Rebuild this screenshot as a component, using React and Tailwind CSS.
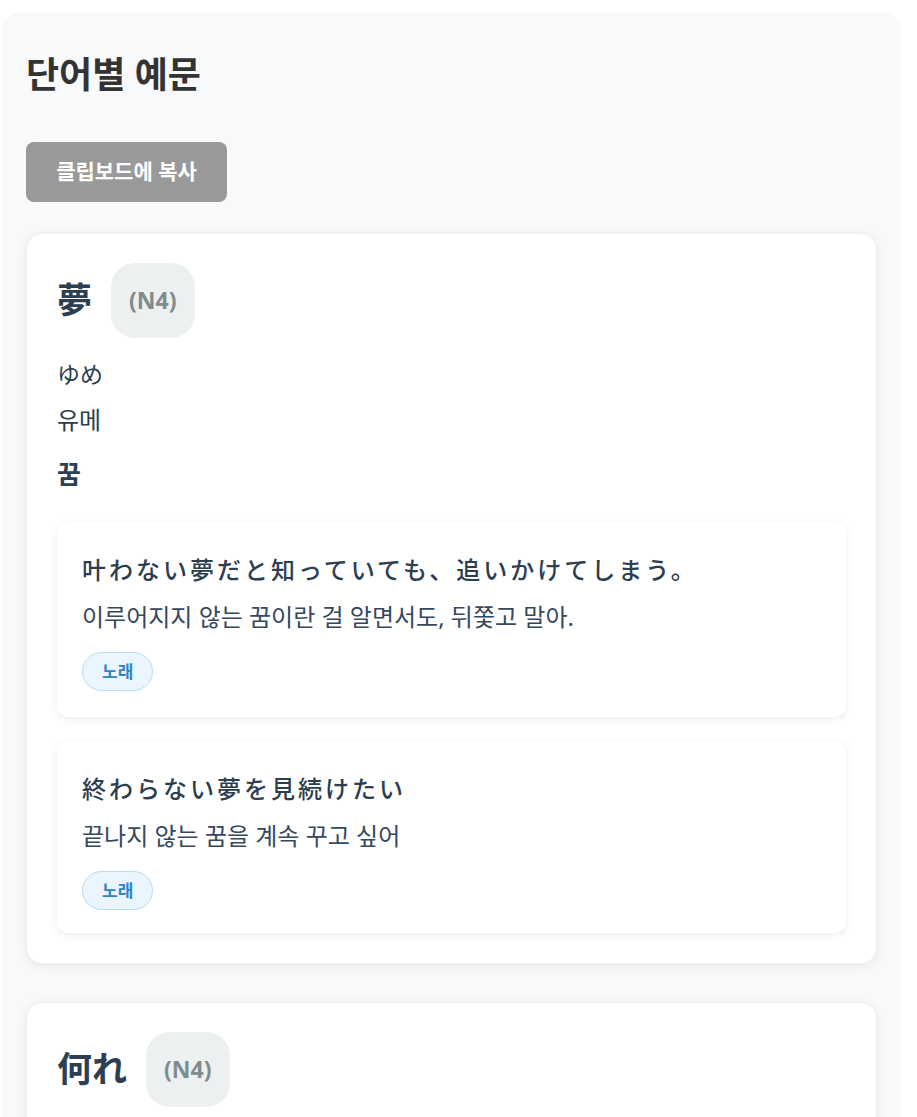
const words = [
  {
    word: '夢',
    level: 'N4',
    reading: 'ゆめ',
    pron: '유메',
    meaning: '꿈',
    examples: [
      { jp: '叶わない夢だと知っていても、追いかけてしまう。', kr: '이루어지지 않는 꿈이란 걸 알면서도, 뒤쫓고 말아.', tag: '노래' },
      { jp: '終わらない夢を見続けたい', kr: '끝나지 않는 꿈을 계속 꾸고 싶어', tag: '노래' },
    ],
  },
  {
    word: '何れ',
    level: 'N4',
  },
];

const font = { fontFamily: '"Noto Sans", "Noto Sans CJK KR", sans-serif' };
const jpFont = { fontFamily: '"Noto Sans", "Noto Sans CJK JP", sans-serif' };

function ExampleCard({ ex, short }) {
  return (
    <div className={`bg-white rounded-xl shadow-[0_2px_8px_rgba(0,0,0,0.08)] px-[25px] pt-[26px] ${short ? 'pb-[23px]' : 'pb-[26px]'}`}>
      <div className="h-[44px] flex items-center text-[24px] tracking-[3px] text-[#2c3e50] font-medium" style={jpFont}>
        {ex.jp}
      </div>
      <div className="h-[30px] mt-[10px] flex items-center text-[24px] text-[#34495e]">{ex.kr}</div>
      <div className="mt-[20px]">
        <span className="inline-flex items-center h-[39px] px-[19px] rounded-full bg-[#eaf5fd] border border-[#b9dcf3] text-[#2e86c1] text-[17px] font-semibold">
          {ex.tag}
        </span>
      </div>
    </div>
  );
}

function WordCard({ w }) {
  return (
    <div className="bg-white rounded-2xl shadow-[0_2px_10px_rgba(0,0,0,0.08)] border border-[#eef0f2] px-[30px] pt-[29px] pb-[30px]">
      <div className="flex items-center gap-[19px]">
        <span className="text-[35px] font-bold text-[#2c3e50]" style={jpFont}>{w.word}</span>
        <span className="h-[75px] px-[18px] flex items-center rounded-[24px] bg-[#ecf0f1] text-[#7f8c8d] text-[23px] font-bold">
          ({w.level})
        </span>
      </div>
      {w.reading && (
        <>
          <div className="h-[34px] mt-[19px] flex items-center text-[23px] text-[#2c3e50]" style={jpFont}>{w.reading}</div>
          <div className="h-[34px] mt-[12px] flex items-center text-[24px] text-[#2c3e50]">{w.pron}</div>
          <div className="h-[34px] mt-[20px] flex items-center text-[26px] font-bold text-[#2c3e50]">{w.meaning}</div>
          <div className="mt-[31px] flex flex-col gap-[24px]">
            {w.examples.map((ex, i) => (
              <ExampleCard key={i} ex={ex} short={i > 0} />
            ))}
          </div>
        </>
      )}
    </div>
  );
}

export default function App() {
  return (
    <div className="min-h-screen bg-white" style={font}>
      <div className="ml-[2px] mt-[13px] w-[899px] bg-[#f8f9fa] rounded-2xl px-[24px] pt-[24px] pb-[40px]">
        <h1 className="h-[48px] mt-[14px] flex items-center text-[36px] font-bold text-[#333]">단어별 예문</h1>
        <button className="mt-[43px] h-[60px] w-[201px] rounded-lg bg-[#999] text-white text-[21px] font-bold">
          클립보드에 복사
        </button>
        <div className="mt-[31px] flex flex-col gap-[38px]">
          {words.map((w, i) => (
            <WordCard key={i} w={w} />
          ))}
        </div>
      </div>
    </div>
  );
}
